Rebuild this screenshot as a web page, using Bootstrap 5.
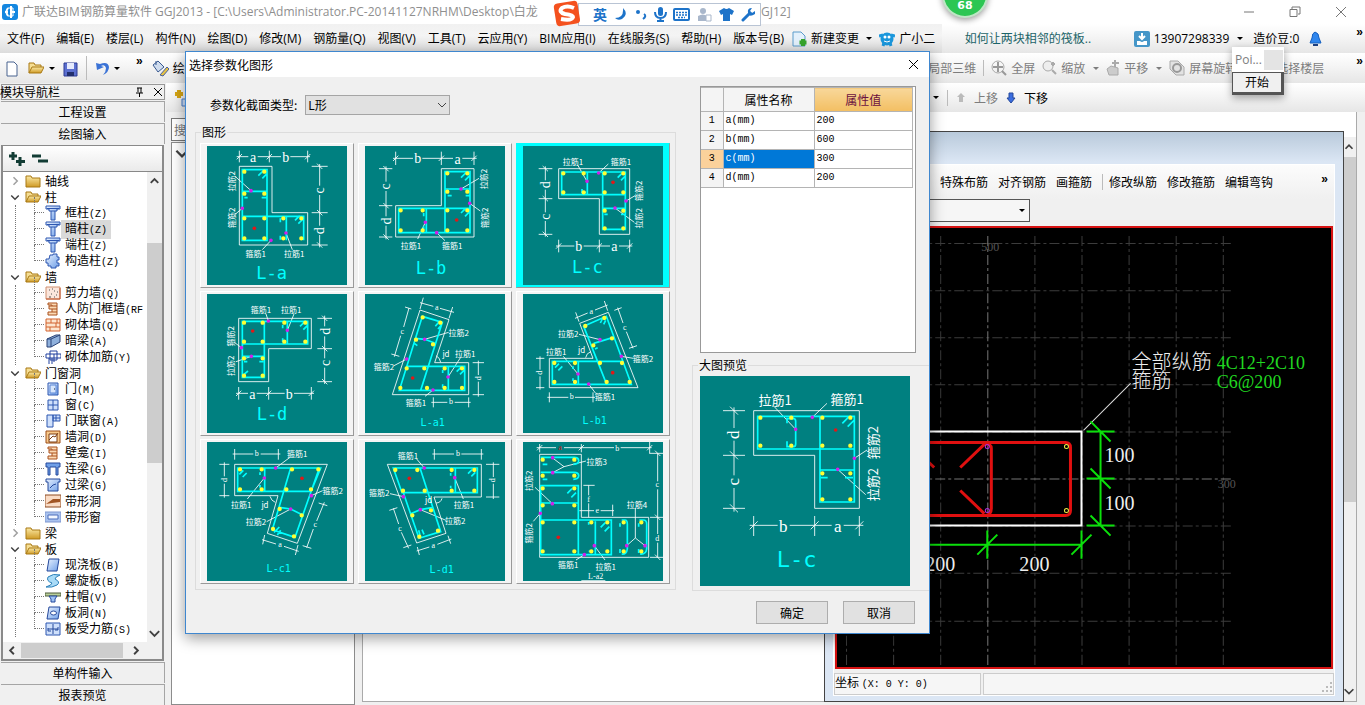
<!DOCTYPE html>
<html lang="zh-CN">
<head>
<meta charset="utf-8">
<meta name="viewport" content="width=device-width, initial-scale=1">
<title>广联达BIM钢筋算量软件 GGJ2013</title>
<link href="https://cdn.jsdelivr.net/npm/bootstrap@5.3.0/dist/css/bootstrap.min.css" rel="stylesheet">
<script src="https://cdn.jsdelivr.net/npm/bootstrap@5.3.0/dist/js/bootstrap.bundle.min.js"></script>
<style>
  :root{--ui:"Open Sans","Noto Sans CJK SC",sans-serif;--song:"Noto Sans CJK SC",sans-serif;--mono:"Liberation Mono","Noto Sans CJK SC",monospace;--face:#f0f0f0;--edge:#8c8c8c}
  body{font:12px/16px var(--song);color:#000;background:var(--face)}
  a{color:inherit;text-decoration:none}
  button,input,select{font:inherit;color:inherit}
  button{border:0;background:none;padding:0}
  svg{flex:none}
  .lat{font-family:var(--mono);font-size:10px}
  /* top bars */
  .titlebar{height:24px;background:#fff;color:#8f8f8f;font-family:var(--ui);padding:0 18px 0 2px}
  .winbtns{gap:34px;color:#777}
  .menubar{height:29px;background:linear-gradient(#f1f1f1,#f4f4f4 40%,#dcdcdc);font-family:var(--ui)}
  .menulist{width:69%;padding-left:7px;gap:12px;overflow:hidden}
  .strip{background:linear-gradient(#fff,#f6f6f6 40%,#e6e6e6)}
  .account{padding:0 2px 0 23px;gap:10px}
  .toolrow{height:30px}
  .lefttools{width:68%;padding-left:5px}
  .more{font:bold 12px/12px "Liberation Sans",sans-serif;align-self:flex-start;margin-top:2px}
  .caret{border:3px solid transparent;border-top-color:currentColor;border-bottom:0;width:6px;height:3px}
  .vsep{width:1px;height:16px;background:#bbb}
  .dim{color:#7d7d7d}
  /* navigation panel */
  .sidebar{width:166px;padding:1px 1px 0;gap:1px}
  .navhead{height:16px;border:1px solid #999}
  .navbtn{height:21px;flex:none;border:1px solid #a5a5a5;border-width:1px 1px 0 0;width:100%}
  .treebox{border:2px solid #8a8a8a;border-width:1px 2px 2px 2px;background:var(--face);margin-right:1px;min-height:0}
  .treetools{height:26px;background:linear-gradient(#fff,#eaeaea);border-bottom:1px solid #888;padding-left:5px;gap:6px}
  .treeview{background:#fff;min-width:0;overflow:hidden;padding:1px 0 0;list-style:none;margin:0}
  .treeview ul{list-style:none;padding:0;margin:0;position:relative}
  .treeview ul::before{content:"";position:absolute;left:12px;top:0;bottom:0;border-left:1px dotted #777}
  .node{display:flex;align-items:center;height:16px;white-space:nowrap;padding-left:6px;gap:4px}
  .leaf{display:flex;align-items:center;height:16px;white-space:nowrap;padding-left:42px;gap:4px;position:relative}
  .leaf::before{content:"";position:absolute;left:31px;top:-8px;width:10px;height:16px;border:1px dotted #777;border-width:0 0 1px 1px}
  .leaf.picked a{background:#d9d9d9;margin-left:-4px;padding:0 4px}
  .sb{width:15px;background:var(--face);align-items:center}
  .thumb{background:#cdcdcd}
  /* work area */
  .pane{background:#fff;border:1px solid var(--edge)}
  .searchbox{height:23px;border:1px solid #777;background:#fff;padding:0 2px;width:183px;color:#777}
  .cadwin{position:absolute;left:461px;top:19px;right:12px;bottom:-1px;border:1px solid #444;background:linear-gradient(#b9cadb,#dbe6f4 30px);padding:32px 8px 5px}
  .cadin{background:var(--face);border:1px solid #fff}
  .cadtools{height:34px;gap:10px;padding:0 6px 0 106px;background:linear-gradient(#fcfcfc,var(--face))}
  .cadcombo{width:196px;height:23px;border:1px solid #555;background:#f6f6f6;padding:0 4px;margin-bottom:4px;border-radius:0}
  .stage{background:#000;border:2px solid #d61212;margin:0 1px 4px;min-height:0}
  .status{height:22px}
  .status>span{border:1px solid #ccc;background:#f6f6f6}
  /* dialog */
  .dlg{position:absolute;left:185px;top:51px;width:745px;height:583px;border:1px solid #3f87cf;background:var(--face);box-shadow:0 4px 14px rgba(0,0,0,.4)}
  .dlghead{height:25px;background:#fff;padding:0 10px 0 3px;font-size:12px;flex:none}
  .typerow{height:55px;padding-left:15px;gap:8px}
  .typesel{width:145px;height:20px;border:1px solid #a5a5a5;background:#e1e1e1;padding:0 2px;appearance:none;border-radius:0}
  .box{border:1px solid #dcdcdc;margin:0;position:relative;min-width:0}
  .box>legend{position:absolute;top:-9px;left:5px;width:auto;float:none;font-size:12px;line-height:16px;background:var(--face);padding:0 1px;margin:0}
  .tiles{display:grid;grid-template-columns:repeat(3,154px);gap:3px 4px;padding:10px 0 0 4px}
  .tile{height:145px;background:#f4f4f4;border:1px solid;border-color:#fff #999 #999 #fff;padding:2px 6px}
  .tile.on{background:#0ff;border-color:#0ff #999 #999 #0ff}
  .tile svg,.big{display:block;background:#008080}
  .props{height:267px;border:1px solid #999;background:#fff;width:216px;padding:0 2px 0 0}
  .props table{width:100%;border-collapse:collapse;table-layout:fixed}
  .props td,.props th{border:1px solid #b4b4b4;border-left:0;font-weight:400;padding:0 2px;height:19px;line-height:18px}
  .props th{background:#f4f4f4;text-align:center}
  .props thead th{height:24px}
  .props td input{border:0;padding:0;width:100%;height:16px;outline:0;background:transparent;display:block}
  .okbtn{width:72px;height:23px;border:1px solid #adadad;background:#e1e1e1}
  /* drawings */
  .w{stroke:#fff;stroke-width:3;stroke-opacity:.85;fill:none}.c{stroke:#0ff;stroke-width:5;fill:none}
  .y,.m,.r{stroke-linecap:round;stroke-width:13;fill:none;stroke:#ff3}.m{stroke:#d020e8;stroke-width:11}.r{stroke:#e01818;stroke-width:11}
  .t{fill:#fff;font-family:var(--song);font-size:24px;text-anchor:middle;dominant-baseline:central}
  .d{fill:#fff;font-family:"Liberation Serif",serif;font-size:42px;text-anchor:middle;dominant-baseline:central}
  .d2{font-size:24px}
  .n{fill:#0ff;font-family:"DejaVu Sans Mono",monospace;font-size:51px;text-anchor:middle}
  .n2{font-size:30px}
  .big .t{font-size:39px}.big .d{font-size:51px}.big .n{font-size:66px}
  .cad text{font-family:"Liberation Serif","Noto Sans CJK SC",serif;font-size:20px;fill:#eee;font-weight:300}
  .cad .g{font-size:18px;fill:#20d820}.cad .axis{font-size:12px;fill:#555}
  /* floating bits */
  .ime{position:absolute;left:553px;top:0;height:28px;z-index:5}
  .imebar{border:1px solid #b9c4d4;background:#fff;height:23px;width:183px;margin-left:-4px;padding:0 4px 0 14px;color:#1d73c9;font-weight:700;font-size:14px}
  .ball{position:absolute;left:942px;top:-28px;width:46px;height:46px;border-radius:50%;background:#2cc653;border:2px solid #bfe5c6;box-shadow:0 2px 6px rgba(0,0,0,.4);color:#fff;font:bold 11px/16px "DejaVu Sans",sans-serif;padding-bottom:2px;z-index:4}
  .mini{position:absolute;left:1232px;top:47px;width:52px;box-shadow:0 3px 8px rgba(0,0,0,.35);z-index:4;background:#fff;font-family:var(--ui)}
  .mini button{height:23px;width:100%;border:1px solid #555;border-width:1px 3px 3px 1px;background:var(--face)}
</style>
</head>
<body class="d-flex flex-column vh-100 overflow-hidden position-relative">

<svg width="0" height="0" class="position-absolute" aria-hidden="true">
  <defs>
    <linearGradient id="gold" x2="0" y2="1"><stop stop-color="#fbe9a5"/><stop offset="1" stop-color="#cf9a25"/></linearGradient>
    <linearGradient id="blue" x2="1" y2="1"><stop stop-color="#e9f2ff"/><stop offset="1" stop-color="#6f9fe8"/></linearGradient>
    <symbol id="right" viewBox="0 0 16 16"><path d="M6 3l5 5-5 5" fill="none" stroke="#a0a0a0" stroke-width="2"/></symbol>
    <symbol id="down" viewBox="0 0 16 16"><path d="M3 6l5 5 5-5" fill="none" stroke="#404040" stroke-width="2"/></symbol>
    <symbol id="up" viewBox="0 0 16 16"><path d="M4 10l4-4 4 4" fill="none" stroke="#404040" stroke-width="2"/></symbol>
    <symbol id="fold" viewBox="0 0 16 16"><path d="M1 3h5l1 2h8v9H1z" fill="url(#gold)" stroke="#a87914"/></symbol>
    <symbol id="foldo" viewBox="0 0 16 16"><path d="M1 13V3h5l1 2h6v3" fill="#f6de93" stroke="#a87914"/><path d="M1 13l3-6h12l-3 6z" fill="url(#gold)" stroke="#a87914"/></symbol>
    <symbol id="col" viewBox="0 0 16 16"><path d="M1 1h14v3h-3v2h-2v9H6V6H4V4H1z" fill="url(#blue)" stroke="#2d56b0"/><path d="M2 3.500h12M6 6h4" stroke="#2d56b0"/></symbol>
    <symbol id="gcol" viewBox="0 0 16 16"><path d="M5 2h3V1h4v3h2v3h-2v3h2v3h-3v2H6v-2H3v-3H1V6h3z" fill="url(#blue)" stroke="#2d56b0"/></symbol>
    <symbol id="wall" viewBox="0 0 16 16"><path d="M1 2h14v12H1z" fill="#fbe6dc" stroke="#d09070"/><path d="M4 5h1M9 6h1M6 9h1M11 10h1M4 12h2M9 12h1M12 7h1M7 4h1" stroke="#555"/><path d="M1 14h14V3" fill="none" stroke="#c0522a"/></symbol>
    <symbol id="ibeam" viewBox="0 0 16 16"><path d="M3 2h9v12H3v-3h4V8H4V5h3V4H3z" fill="#fbd9b4" stroke="#a9501c"/><path d="M7 5h5M7 8h5M7 11h5" stroke="#a9501c"/></symbol>
    <symbol id="brick" viewBox="0 0 16 16"><path d="M1 2h14v12H1zM1 6h14M1 10h14M6 2v4M11 6v4M5 10v4M12 2v4" fill="#fde6cf" stroke="#d2622f"/></symbol>
    <symbol id="beam" viewBox="0 0 16 16"><path d="M2 6l9-4h4v7l-9 5H2z" fill="#8fb0dc" stroke="#2b4377"/><path d="M2 6h4l9-4M6 6v8" fill="none" stroke="#2b4377"/></symbol>
    <symbol id="rebar" viewBox="0 0 16 16"><path d="M1 5h15v4H1zM5 2h7v9H5zM4 9v6M7 9v6M9 5v8" fill="none" stroke="#1e3f9e"/></symbol>
    <symbol id="door" viewBox="0 0 16 16"><path d="M3 2h10v12H3z" fill="url(#blue)" stroke="#2d56b0"/><path d="M5 4h6v8H5z" fill="#d7e6fc" stroke="#5a86d6"/><path d="M9 8h1" stroke="#123"/></symbol>
    <symbol id="win" viewBox="0 0 16 16"><path d="M3 3h10v10H3zM8 3v10M3 8h10" fill="#cfe0fb" stroke="#2d56b0"/></symbol>
    <symbol id="doorwin" viewBox="0 0 16 16"><path d="M2 2h6v12H2zM8 2h7v6H8zM11 2v6M8 5h7" fill="#cfe0fb" stroke="#2d56b0"/></symbol>
    <symbol id="hole" viewBox="0 0 16 16"><path d="M1 2h14v12H1z" fill="#f8c98b" stroke="#9b4c16"/><path d="M4 5h8v8H4z" fill="#fff" stroke="#7c3d12"/><path d="M4 11l4-4 2 1 3-4" fill="none" stroke="#7c3d12"/></symbol>
    <symbol id="lbeam" viewBox="0 0 16 16"><path d="M1 2h14v4h-2v8h-2V6H5v8H3V6H1z" fill="#6f9fe8" stroke="#24489b"/></symbol>
    <symbol id="gbeam" viewBox="0 0 16 16"><path d="M1 2h14v3h-2v9H3V5H1z" fill="url(#blue)" stroke="#24489b"/><path d="M5 11l3-3 3-1" fill="none" stroke="#24489b"/></symbol>
    <symbol id="sthole" viewBox="0 0 16 16"><path d="M0 2h16v12H0z" fill="#fadcc6" stroke="#8e4a20"/><path d="M1 11l7-5h7v3l-8 1z" fill="#a15524"/></symbol>
    <symbol id="stwin" viewBox="0 0 16 16"><path d="M0 3h16v10H0z" fill="#a9c2ee" stroke="#7e97d0"/><path d="M3 6h10v4H3z" fill="#f2f7ff" stroke="#4d6ebc"/></symbol>
    <symbol id="slab" viewBox="0 0 16 16"><path d="M4 2h10l-2 12H2z" fill="url(#blue)" stroke="#24489b"/></symbol>
    <symbol id="spiral" viewBox="0 0 16 16"><path d="M3 4q5-4 12-2-5 2-5 4 6 3 2 6-5 3-11 2 6-2 6-4-6-2-4-6z" fill="#a9dbf7" stroke="#2b7fb8"/></symbol>
    <symbol id="cap" viewBox="0 0 16 16"><path d="M0 4h16v3H0z" fill="#b9cf9a" stroke="#4c5a3b"/><path d="M4 7h8l-2 3v3H6v-3z" fill="#9cc0f2" stroke="#24489b"/></symbol>
    <symbol id="shole" viewBox="0 0 16 16"><path d="M4 2h11l-2 12H2z" fill="url(#blue)" stroke="#24489b"/><ellipse cx="8.500" cy="8" rx="3" ry="2" fill="#fff" stroke="#24489b"/></symbol>
    <symbol id="force" viewBox="0 0 16 16"><path d="M1 2h14v12H1z" fill="#cfe0fb" stroke="#2d56b0"/><path d="M8 3v10M3 8h10M3 7v3h3M13 6v3h-3" fill="none" stroke="#24489b"/></symbol>
  </defs>
</svg>

<header class="titlebar d-flex align-items-center justify-content-between flex-shrink-0">
  <div class="d-flex align-items-center gap-1 text-nowrap">
    <svg width="16" height="16" viewBox="0 0 16 16"><rect width="16" height="16" rx="3" fill="#1487e0"/><path d="M9 2v12M9 8h4M3 8h3M6 4q-3 4 0 8" fill="none" stroke="#fff" stroke-width="2"/><path d="M6 4h5v8H6" fill="none" stroke="#fff"/></svg>
    <span>广联达BIM钢筋算量软件 GGJ2013 - [C:\Users\Administrator.PC-20141127NRHM\Desktop\白龙</span>
    <span class="position-absolute" style="left:761px">GJ12]</span>
  </div>
  <div class="winbtns d-flex">
    <svg width="12" height="12"><path d="M1 6h10" stroke="#777"/></svg>
    <svg width="12" height="12"><path d="M1 3.500h7v7H1zM3 3V1h8v7H9" fill="none" stroke="#777"/></svg>
    <svg width="12" height="12"><path d="M1 1l10 10M11 1L1 11" stroke="#777"/></svg>
  </div>
</header>

<nav class="menubar d-flex flex-shrink-0">
  <div class="menulist d-flex align-items-center text-nowrap">
    <a href="#">文件(F)</a><a href="#">编辑(E)</a><a href="#">楼层(L)</a><a href="#">构件(N)</a><a href="#">绘图(D)</a><a href="#">修改(M)</a><a href="#">钢筋量(Q)</a><a href="#">视图(V)</a><a href="#">工具(T)</a><a href="#">云应用(Y)</a><a href="#">BIM应用(I)</a><a href="#">在线服务(S)</a><a href="#">帮助(H)</a><a href="#">版本号(B)</a>
    <a href="#" class="d-flex align-items-center gap-1" style="margin-left:-4px"><svg width="15" height="16" viewBox="0 0 15 16"><path d="M1 1h8l4 4v10H1z" fill="#e3f0fb" stroke="#5a9bcb"/><path d="M11 8v7M7.500 11.500h7" stroke="#37a42c" stroke-width="4"/></svg>新建变更</a>
    <span class="caret" style="margin-left:-5px"></span>
    <a href="#" class="d-flex align-items-center gap-1" style="margin-left:-5px"><svg width="16" height="16" viewBox="0 0 16 16"><circle cx="8" cy="8" r="6.500" fill="#1b97dc"/><path d="M0 5l4-1M16 5l-4-1M4 15l1-3M12 15l-1-3" stroke="#1b97dc" stroke-width="3"/><circle cx="6" cy="6" r="1.500" fill="#fff"/><circle cx="10" cy="6" r="1.500" fill="#fff"/><path d="M5 10q3 2 6 0" stroke="#fff" fill="none"/></svg>广小二</a>
  </div>
  <div class="strip account flex-grow-1 d-flex align-items-center text-nowrap">
    <a href="#" class="me-auto" style="color:#1c6468">如何让两块相邻的筏板..</a>
    <div class="d-flex align-items-center gap-1">
      <svg width="16" height="16"><rect width="16" height="16" rx="2" fill="#4596c8"/><path d="M8 2v5M5 5l3 3 3-3" stroke="#fff" stroke-width="2" fill="none"/><path d="M3 10h3q2 2 4 0h3v4H3z" fill="#fff"/></svg>
      <span>13907298339</span><span class="caret ms-1"></span>
    </div>
    <span>造价豆:0</span>
    <svg width="13" height="16"><path d="M6 1q4 1 4 6l2 5H1l2-5q0-5 3-6z" fill="#2f86ee" stroke="#1560c0"/><path d="M4 14h5" stroke="#1c3f80" stroke-width="2"/></svg>
    <span class="more ms-4">»</span>
  </div>
</nav>

<div class="toolrow strip d-flex flex-shrink-0">
  <div class="lefttools d-flex align-items-center gap-2">
    <button type="button" aria-label="新建"><svg width="14" height="16"><path d="M2 1h7l3 3v11H2z" fill="#fff" stroke="#49628f"/></svg></button>
    <button type="button" aria-label="打开" class="d-flex align-items-center gap-1"><svg width="18" height="16" viewBox="0 0 16 16"><use href="#foldo"/></svg><span class="caret"></span></button>
    <button type="button" aria-label="保存"><svg width="15" height="15"><path d="M1 1h13v13H1z" fill="#5b6fd0" stroke="#2c3a92"/><path d="M4 1h7v6H4z" fill="#e5eafc"/><path d="M4 10h7v4H4z" fill="#222f6d"/></svg></button>
    <span class="vsep" style="height:24px"></span>
    <button type="button" aria-label="撤销" class="d-flex align-items-center gap-1"><svg width="15" height="15"><path d="M1 2l1 7 7-3-3-1q4-2 5 2 0 4-3 7 6-3 6-8-1-6-9-3z" fill="#3b73d6"/></svg><span class="caret"></span></button>
    <span class="more ms-2">»</span>
    <button type="button" class="d-flex align-items-center gap-1"><svg width="18" height="18"><path d="M2 6l5-4 6 6-6 5z" fill="#cfdcee" stroke="#37588f"/><path d="M5 6V2" stroke="#37588f"/><path d="M9 16l7-8 2 2-6 7z" fill="#e8c342" stroke="#48609a"/></svg>绘</button>
  </div>
  <div class="flex-grow-1 d-flex align-items-center text-nowrap dim" style="gap:7px;padding-right:2px">
    <span>局部三维</span><span class="vsep"></span>
    <button type="button" class="d-flex align-items-center gap-1"><svg width="16" height="16"><circle cx="7" cy="7" r="6" fill="none" stroke="#aaa"/><path d="M7 2v10M2 7h10M11 11l4 4" stroke="#999" stroke-width="2"/></svg>全屏</button>
    <button type="button" class="d-flex align-items-center gap-1"><svg width="15" height="16"><circle cx="6" cy="6" r="5" fill="#eee" stroke="#aaa"/><path d="M10 10l4 4M11 2v4M9 4h4" stroke="#aaa" stroke-width="2"/></svg>缩放<span class="caret ms-1"></span></button>
    <button type="button" class="d-flex align-items-center gap-1"><svg width="14" height="16"><path d="M1 9l4-3 7 2v7H3z" fill="#ccc" stroke="#aaa"/><path d="M9 0v7M6 3h7" stroke="#aaa" stroke-width="2"/></svg>平移<span class="caret ms-1"></span></button>
    <button type="button" class="d-flex align-items-center gap-1"><svg width="16" height="16"><path d="M1 1h8l6 6v8H7L1 9z" fill="#e2e2e2" stroke="#aaa"/><circle cx="8" cy="8" r="4" fill="none" stroke="#999" stroke-width="2"/></svg>屏幕旋转</button>
    <span class="ms-4 ps-2">选择楼层</span>
    <span class="more ms-auto text-black">»</span>
  </div>
</div>

<main class="d-flex flex-grow-1" style="min-height:0">
  <aside class="sidebar d-flex flex-column flex-shrink-0">
    <div class="navhead d-flex align-items-center justify-content-between flex-shrink-0">
      <span style="margin-left:-2px">模块导航栏</span>
      <span class="d-flex gap-2"><svg width="11" height="10"><path d="M3 1h5M4 1v4M7 1v5M2 6h7M5.500 6v4" stroke="#000" fill="none"/></svg><svg width="11" height="10"><path d="M1 1l8 8M9 1L1 9" stroke="#000"/></svg></span>
    </div>
    <button type="button" class="navbtn">工程设置</button>
    <button type="button" class="navbtn">绘图输入</button>
    <div class="treebox d-flex flex-column flex-grow-1">
      <div class="treetools d-flex align-items-center flex-shrink-0">
        <svg width="17" height="16"><path d="M5 1v8M1 5h8M12 6v9M8 10.500h9" stroke="#123c34" stroke-width="3"/></svg>
        <svg width="17" height="16"><path d="M1 5h9M7 10h10" stroke="#123c34" stroke-width="3"/></svg>
      </div>
      <div class="d-flex flex-grow-1" style="min-height:0">
        <ul class="treeview flex-grow-1">
          <li><div class="node"><svg width="12" height="12"><use href="#right"/></svg><svg width="16" height="16"><use href="#fold"/></svg><a href="#">轴线</a></div></li>
          <li><div class="node"><svg width="12" height="12"><use href="#down"/></svg><svg width="16" height="16"><use href="#foldo"/></svg><a href="#">柱</a></div>
            <ul>
              <li class="leaf"><svg width="16" height="16"><use href="#col"/></svg><a href="#">框柱<span class="lat">(Z)</span></a></li>
              <li class="leaf picked"><svg width="16" height="16"><use href="#col"/></svg><a href="#">暗柱<span class="lat">(Z)</span></a></li>
              <li class="leaf"><svg width="16" height="16"><use href="#col"/></svg><a href="#">端柱<span class="lat">(Z)</span></a></li>
              <li class="leaf"><svg width="16" height="16"><use href="#gcol"/></svg><a href="#">构造柱<span class="lat">(Z)</span></a></li>
            </ul></li>
          <li><div class="node"><svg width="12" height="12"><use href="#down"/></svg><svg width="16" height="16"><use href="#foldo"/></svg><a href="#">墙</a></div>
            <ul>
              <li class="leaf"><svg width="16" height="16"><use href="#wall"/></svg><a href="#">剪力墙<span class="lat">(Q)</span></a></li>
              <li class="leaf"><svg width="16" height="16"><use href="#ibeam"/></svg><a href="#">人防门框墙<span class="lat">(RF</span></a></li>
              <li class="leaf"><svg width="16" height="16"><use href="#brick"/></svg><a href="#">砌体墙<span class="lat">(Q)</span></a></li>
              <li class="leaf"><svg width="16" height="16"><use href="#beam"/></svg><a href="#">暗梁<span class="lat">(A)</span></a></li>
              <li class="leaf"><svg width="16" height="16"><use href="#rebar"/></svg><a href="#">砌体加筋<span class="lat">(Y)</span></a></li>
            </ul></li>
          <li><div class="node"><svg width="12" height="12"><use href="#down"/></svg><svg width="16" height="16"><use href="#foldo"/></svg><a href="#">门窗洞</a></div>
            <ul>
              <li class="leaf"><svg width="16" height="16"><use href="#door"/></svg><a href="#">门<span class="lat">(M)</span></a></li>
              <li class="leaf"><svg width="16" height="16"><use href="#win"/></svg><a href="#">窗<span class="lat">(C)</span></a></li>
              <li class="leaf"><svg width="16" height="16"><use href="#doorwin"/></svg><a href="#">门联窗<span class="lat">(A)</span></a></li>
              <li class="leaf"><svg width="16" height="16"><use href="#hole"/></svg><a href="#">墙洞<span class="lat">(D)</span></a></li>
              <li class="leaf"><svg width="16" height="16"><use href="#ibeam"/></svg><a href="#">壁龛<span class="lat">(I)</span></a></li>
              <li class="leaf"><svg width="16" height="16"><use href="#lbeam"/></svg><a href="#">连梁<span class="lat">(G)</span></a></li>
              <li class="leaf"><svg width="16" height="16"><use href="#gbeam"/></svg><a href="#">过梁<span class="lat">(G)</span></a></li>
              <li class="leaf"><svg width="16" height="16"><use href="#sthole"/></svg><a href="#">带形洞</a></li>
              <li class="leaf"><svg width="16" height="16"><use href="#stwin"/></svg><a href="#">带形窗</a></li>
            </ul></li>
          <li><div class="node"><svg width="12" height="12"><use href="#right"/></svg><svg width="16" height="16"><use href="#fold"/></svg><a href="#">梁</a></div></li>
          <li><div class="node"><svg width="12" height="12"><use href="#down"/></svg><svg width="16" height="16"><use href="#foldo"/></svg><a href="#">板</a></div>
            <ul>
              <li class="leaf"><svg width="16" height="16"><use href="#slab"/></svg><a href="#">现浇板<span class="lat">(B)</span></a></li>
              <li class="leaf"><svg width="16" height="16"><use href="#spiral"/></svg><a href="#">螺旋板<span class="lat">(B)</span></a></li>
              <li class="leaf"><svg width="16" height="16"><use href="#cap"/></svg><a href="#">柱帽<span class="lat">(V)</span></a></li>
              <li class="leaf"><svg width="16" height="16"><use href="#shole"/></svg><a href="#">板洞<span class="lat">(N)</span></a></li>
              <li class="leaf"><svg width="16" height="16"><use href="#force"/></svg><a href="#">板受力筋<span class="lat">(S)</span></a></li>
            </ul></li>
        </ul>
        <div class="sb d-flex flex-column justify-content-between">
          <svg width="15" height="18" viewBox="0 0 16 16"><use href="#up"/></svg>
          <span class="thumb w-100" style="height:220px;margin:53px 0 auto"></span>
          <svg width="15" height="18" viewBox="0 0 16 16"><use href="#down"/></svg>
        </div>
      </div>
      <div class="d-flex align-items-center flex-shrink-0" style="height:17px">
        <svg width="18" height="15" viewBox="0 0 16 16"><path d="M10 4L6 8l4 4" fill="none" stroke="#404040" stroke-width="2"/></svg>
        <span class="thumb" style="width:102px;height:15px"></span>
        <svg width="26" height="15" viewBox="0 0 16 16"><path d="M6 4l4 4-4 4" fill="none" stroke="#404040" stroke-width="2"/></svg>
      </div>
    </div>
    <button type="button" class="navbtn">单构件输入</button>
    <button type="button" class="navbtn">报表预览</button>
  </aside>

  <div class="flex-grow-1 d-flex flex-column" style="min-width:0">
    <div class="strip d-flex flex-shrink-0" style="height:29px">
      <div class="d-flex align-items-center" style="width:763px;padding-left:8px"><svg width="16" height="18"><path d="M5 1v8M1 5h8" stroke="#d6a514" stroke-width="4"/><path d="M8 10h7v7H8z" fill="#cfe0fb" stroke="#4d7fc9"/></svg></div>
      <div class="d-flex align-items-center gap-2 text-nowrap">
        <span class="caret ms-1"></span><span class="vsep"></span>
        <button type="button" class="d-flex align-items-center gap-2 dim"><svg width="10" height="12"><path d="M5 1l4 4H7v5H3V5H1z" fill="#bbb"/></svg>上移</button>
        <button type="button" class="d-flex align-items-center gap-2"><svg width="10" height="12"><path d="M5 11l4-5H7V1H3v5H1z" fill="#3c6ee0" stroke="#24489b"/></svg>下移</button>
      </div>
    </div>
    <div class="flex-grow-1 d-flex" style="gap:7px;padding:0 8px 0 5px;min-height:0">
      <div class="d-flex flex-column" style="width:184px;padding-top:6px;gap:1px">
        <input class="searchbox" type="text" aria-label="搜索构件" placeholder="搜">
        <div class="pane flex-grow-1"><svg width="20" height="18" viewBox="0 0 18 18"><use href="#down"/></svg></div>
      </div>
      <div class="flex-grow-1 position-relative bg-white" style="border:1px solid #aaa;border-width:0 1px 1px 1px;margin-bottom:3px;min-width:0">
        <div class="position-absolute end-0 d-flex flex-column justify-content-between sb" style="top:25px;bottom:0;width:14px">
          <svg width="14" height="20" viewBox="0 0 16 16"><use href="#up"/></svg>
          <span class="thumb w-100" style="height:345px;margin:0 0 auto"></span>
          <svg width="14" height="20" viewBox="0 0 16 16"><use href="#down"/></svg>
        </div>
        <section class="cadwin d-flex flex-column">
          <div class="cadin d-flex flex-column flex-grow-1" style="min-height:0">
            <div class="cadtools d-flex align-items-center text-nowrap flex-shrink-0">
              <a href="#">特殊布筋</a><a href="#">对齐钢筋</a><a href="#">画箍筋</a><span class="vsep"></span><a href="#" style="margin-left:-4px">修改纵筋</a><a href="#">修改箍筋</a><a href="#">编辑弯钩</a><span class="more ms-auto mt-2">»</span>
            </div>
            <div class="cadcombo d-flex align-items-center justify-content-end flex-shrink-0"><span class="caret"></span></div>
            <div class="stage flex-grow-1">
              <svg class="cad d-block" width="100%" height="100%" viewBox="837 228 493 439" preserveAspectRatio="xMinYMin slice">
                <g stroke="#3c3c3c" stroke-dasharray="10 3 3 3"><path d="M846.500 236V665M893.500 236V665M940.500 236V665M1034.500 236V665M1081.500 236V665M1128.500 236V665M1175.500 236V665M1222.500 236V665M840 243.500H1230M840 290.500H1230M840 337.500H1230M840 384.500H1230M840 431.500H1230M840 525.500H1230M840 572.500H1230M840 620.500H1230"/><path d="M987.500 236V665M840 478.500H1230" stroke="#777"/></g>
                <text class="axis" x="981" y="251">500</text><text class="axis" x="1217" y="487">300</text>
                <path d="M860 431H1081V525H860" fill="none" stroke="#fff" stroke-width="2"/>
                <path d="M870 442H1065q5 0 5 5V510q0 5-5 5H870M984 443q7 0 7 5V508q0 7-7 7M984 444L960 467M960 490L984 513M910 444L934 467" fill="none" stroke="#e01010" stroke-width="3"/>
                <g fill="none"><circle cx="987" cy="446" r="2" stroke="#b030e0"/><circle cx="987" cy="510" r="2" stroke="#b030e0"/><circle cx="1066" cy="446" r="2" stroke="#ee4"/><circle cx="1066" cy="510" r="2" stroke="#ee4"/></g>
                <path d="M1083 430L1130 383" stroke="#ddd"/>
                <path d="M1100 431V525M1086 431h28M1086 478h28M1086 525h28M1090 421l20 20M1090 468l20 20M1090 515l20 20M880 544H1081M987 530v28M1081 530v28M977 554l20-20M1071 554l20-20" stroke="#0be00b" stroke-width="2"/>
                <text x="1131" y="369">全部纵筋</text><text x="1131" y="388">箍筋</text>
                <text class="g" x="1216" y="369">4C12+2C10</text><text class="g" x="1216" y="388">C6@200</text>
                <text x="1104" y="462">100</text><text x="1104" y="509">100</text><text x="1019" y="570">200</text><text x="925" y="570">200</text>
              </svg>
            </div>
            <div class="status d-flex flex-shrink-0" style="gap:2px"><span style="width:147px">坐标 <span class="lat">(X: 0 Y: 0)</span></span><span class="flex-grow-1 d-flex align-items-end justify-content-end"><svg width="12" height="12"><path d="M9 1h2M5 5h2M9 5h2M1 9h2M5 9h2M9 9h2" stroke="#bbb" stroke-width="2"/></svg></span></div>
          </div>
        </section>
      </div>
    </div>
  </div>
</main>

<div class="ime d-flex align-items-center">
  <svg width="29" height="28" viewBox="0 0 29 28" style="z-index:1"><rect x="2" y="2" width="24" height="23" rx="4" fill="#f4511e" transform="rotate(-9 14 14)"/><path d="M21 8q-7-3-12 0-4 4 3 6 8 1 8 3-1 4-12 2" fill="none" stroke="#fff" stroke-width="4"/></svg>
  <div class="imebar d-flex align-items-center justify-content-between">
    <span>英</span>
    <svg width="14" height="14"><path d="M9 1q6 6-1 11-4 2-7-1 9 0 8-10z" fill="#1d73c9"/></svg>
    <svg width="12" height="14"><circle cx="3" cy="5" r="2" fill="#1d73c9"/><path d="M9 7q3 2-1 5" stroke="#1d73c9" stroke-width="2" fill="none"/></svg>
    <svg width="13" height="16"><rect x="4" y="1" width="5" height="9" rx="2.500" fill="#1d73c9"/><path d="M1 6q0 6 5.500 6T12 6M6.500 12v3M3 15h7" stroke="#1d73c9" stroke-width="2" fill="none"/></svg>
    <svg width="17" height="13"><rect x="1" y="1" width="15" height="11" rx="1" fill="none" stroke="#1d73c9" stroke-width="2"/><path d="M3 4.500h11M3 7h11M5 9.500h7" stroke="#1d73c9" stroke-width="1.500" stroke-dasharray="2 1"/></svg>
    <svg width="15" height="15"><circle cx="6" cy="4" r="3" fill="#a9b7cb"/><path d="M1 14V9q5-3 9 0v5z" fill="#a9b7cb"/><path d="M9 8h5v6H9z" fill="#fff" stroke="#a9b7cb"/></svg>
    <svg width="15" height="14"><path d="M5 1q2.500 2 5 0l5 3-2 4-2-1v7H4V7L2 8 0 4z" fill="#1d73c9"/></svg>
    <svg width="15" height="15"><path d="M2 13l7-7" stroke="#1d73c9" stroke-width="3" stroke-linecap="round"/><path d="M14 4l-3 2-2-2 2-3q-5 0-4 5t7 1z" fill="#1d73c9"/></svg>
  </div>
</div>
<div class="ball d-flex align-items-end justify-content-center"><span>68</span></div>
<div class="mini">
  <div class="d-flex dim justify-content-between align-items-center" style="height:25px;padding:0 1px 0 3px">Poi...<span style="width:19px;height:20px;background:#e4e4e4"></span></div>
  <button type="button">开始</button>
</div>

<div class="dlg d-flex flex-column" role="dialog" aria-labelledby="dlgname">
  <div class="dlghead d-flex align-items-center justify-content-between"><span id="dlgname">选择参数化图形</span><button type="button" class="d-flex" aria-label="关闭"><svg width="11" height="11"><path d="M1 1l9 9M10 1L1 10" stroke="#000"/></svg></button></div>
  <div class="d-flex flex-grow-1">
    <div class="d-flex flex-column" style="width:490px;padding-left:9px">
      <div class="typerow d-flex align-items-center">
        <label for="shapetype">参数化截面类型:</label>
        <div class="position-relative d-flex align-items-center"><select id="shapetype" class="typesel"><option>L形</option></select><svg class="position-absolute end-0 pe-none" width="16" height="16"><path d="M4 6l4 4 4-4" fill="none" stroke="#444"/></svg></div>
      </div>
      <fieldset class="box" style="height:458px"><legend>图形</legend>
        <div class="tiles">
          <button type="button" class="tile"><svg width="140" height="139" viewBox="66 51 420 417">
            <path class="w" d="M163 112H261V251H368V348H163ZM163 65V100M253 65V100M368 65V100M155 83H190M218 83H288M316 83H375M155 91l16-16M245 91l16-16M360 91l16-16M380 112H428M380 251H428M380 348H428M404 105V170M404 198V290M404 318V355M396 104l16 16M396 243l16 16M396 340l16 16M150 142L198 185M148 258L172 238M232 362L258 334M322 362L303 312"/>
            <path class="c" d="M172 122H246V334H172ZM172 262H356V334M172 187H246M304 262V334M220 140l14-14M232 148l14-14M330 274l14-14M340 284l14-14M178 206h10M230 206h14M286 268v12M286 320v12"/>
            <path class="y" d="M178 128h0M238 128h0M178 194h0M238 194h0M178 268h0M238 268h0M295 268h0M349 268h0M178 328h0M238 328h0M295 328h0M349 328h0"/><path class="m" d="M198 185h0M172 238h0M258 334h0M303 312h0"/><path class="r" d="M208 298h0"/>
            <text class="d" x="204" y="86">a</text><text class="d" x="302" y="84">b</text><text class="d" transform="rotate(-90 404 184)" x="404" y="184">c</text><text class="d" transform="rotate(-90 404 305)" x="404" y="305">d</text>
            <text class="t" transform="rotate(-90 139 157)" x="139" y="157">拉筋2</text><text class="t" transform="rotate(-90 139 266)" x="139" y="266">箍筋2</text><text class="t" x="212" y="373">箍筋1</text><text class="t" x="328" y="373">拉筋1</text><text class="n" x="260" y="450">L-a</text></svg></button>
          <button type="button" class="tile"><svg width="140" height="139" viewBox="30 51 420 417">
            <path class="w" d="M259 119H357V324H122V230H259ZM122 68V108M259 68V108M357 68V108M114 88H174M202 88H294M322 88H365M114 96l16-16M251 96l16-16M349 96l16-16M72 119H112M72 230H112M72 324H112M93 112V158M93 186V262M93 290V331M85 111l16 16M85 222l16 16M85 316l16 16M372 148L318 180M376 246L344 223M188 330L211 280M270 335L245 311"/>
            <path class="c" d="M270 128H345V311H270ZM345 238H131V311H345M214 238V311M270 180H345M318 146l14-14M330 154l14-14M318 252l14-14M330 262l14-14M278 200h12M332 200h12M206 252v10M206 292v10"/>
            <path class="y" d="M277 133h0M337 133h0M277 188h0M337 188h0M277 244h0M337 244h0M137 244h0M203 244h0M137 304h0M203 304h0M277 304h0M337 304h0"/><path class="m" d="M318 180h0M344 223h0M211 280h0M245 311h0"/><path class="r" d="M305 273h0"/>
            <text class="d" x="188" y="88">b</text><text class="d" x="308" y="90">a</text><text class="d" transform="rotate(-90 93 172)" x="93" y="172">c</text><text class="d" transform="rotate(-90 93 276)" x="93" y="276">d</text>
            <text class="t" transform="rotate(-90 386 150)" x="386" y="150">拉筋2</text><text class="t" transform="rotate(-90 388 266)" x="388" y="266">箍筋2</text><text class="t" x="168" y="349">拉筋1</text><text class="t" x="292" y="349">箍筋1</text><text class="n" x="228" y="435">L-b</text></svg></button>
          <button type="button" class="tile on"><svg width="140" height="139" viewBox="504 51 420 417">
            <path class="w" d="M611 119H824V316H733V209H611ZM551 119H592M551 209H592M551 316H592M571 112V154M571 182V250M571 276V323M563 111l16 16M563 201l16 16M563 308l16 16M611 332V370M733 332V370M824 332V370M603 351H658M686 351H765M792 351H832M603 359l16-16M725 359l16-16M816 359l16-16M668 108L696 157M760 105L731 132M840 200L813 216M838 280L780 237"/>
            <path class="c" d="M620 129H811V197H620ZM743 129V301H811V129M697 129V197M743 238H811M788 146l12-12M798 154l12-12M681 180v10h12M748 256h10M798 256h10"/>
            <path class="y" d="M625 133h0M686 133h0M749 133h0M805 133h0M625 190h0M686 190h0M749 190h0M805 190h0M749 245h0M805 245h0M749 298h0M805 298h0"/><path class="m" d="M731 132h0M696 157h0M813 216h0M780 237h0"/><path class="r" d="M774 160h0"/>
            <text class="d" transform="rotate(-90 571 167)" x="571" y="167">d</text><text class="d" transform="rotate(-90 571 263)" x="571" y="263">c</text><text class="d" x="671" y="351">b</text><text class="d" x="778" y="351">a</text>
            <text class="t" x="654" y="98">拉筋1</text><text class="t" x="798" y="98">箍筋1</text><text class="t" transform="rotate(-90 850 185)" x="850" y="185">箍筋2</text><text class="t" transform="rotate(-90 850 268)" x="850" y="268">拉筋2</text><text class="n" x="697" y="432">L-c</text></svg></button>
          <button type="button" class="tile"><svg width="140" height="139" viewBox="51 15 420 417">
            <path class="w" d="M146 88H364V179H236V278H146ZM382 88H426M382 179H426M382 278H426M404 80V112M404 142V208M404 236V285M396 80l16 16M396 171l16 16M396 270l16 16M146 294V332M236 294V332M364 294V332M138 313H174M200 313H284M312 313H372M138 321l16-16M228 321l16-16M356 321l16-16M228 75L235 96M312 75L292 124M133 160L154 176M138 218L184 202"/>
            <path class="c" d="M157 97H353V165H157ZM157 165V265H223V97M292 97V165M157 202H223M330 112l12-12M340 122l12-12M162 256l12-10M278 108v10M278 148v10M162 218h10M208 218h12"/>
            <path class="y" d="M162 101h0M218 101h0M283 101h0M346 101h0M162 158h0M218 158h0M283 158h0M346 158h0M162 208h0M218 208h0M162 260h0M218 260h0"/><path class="m" d="M235 96h0M292 124h0M154 176h0M184 202h0"/><path class="r" d="M188 126h0"/>
            <text class="d" transform="rotate(-90 407 127)" x="407" y="127">d</text><text class="d" transform="rotate(-90 407 222)" x="407" y="222">c</text><text class="d" x="187" y="315">a</text><text class="d" x="298" y="315">b</text>
            <text class="t" x="213" y="60">箍筋1</text><text class="t" x="304" y="60">拉筋1</text><text class="t" transform="rotate(-90 122 142)" x="122" y="142">箍筋2</text><text class="t" transform="rotate(-90 122 230)" x="122" y="230">拉筋2</text><text class="n" x="246" y="394">L-d</text></svg></button>
          <button type="button" class="tile"><svg width="140" height="139" viewBox="525 15 420 417">
            <path class="w" d="M690 63L777 92L734 221H836V317H607ZM700 26L690 60M788 54L777 88M690 41L730 52M750 58L792 70M645 54L664 60M604 195L628 202M657 57L641 114M632 140L613 203M848 221H882M848 317H882M865 215V258M865 278V323M730 325V355M836 325V355M724 340H772M794 340H842M776 130L704 151M612 230L650 210M812 205L774 264M705 322L729 303M738 200q12 6 14 20"/>
            <path class="c" d="M697 82L757 100L692 304H628ZM648 232H824V304H628M775 232V304M676 148L704 151L734 162M736 112l10-12M744 120l10-12M800 248l12-12M810 256l12-12M758 242v10M758 286v10M674 164l8 6"/>
            <path class="y" d="M698 85h0M751 101h0M678 152h0M729 166h0M650 238h0M703 238h0M764 238h0M816 238h0M631 297h0M711 297h0M764 297h0M816 297h0"/><path class="m" d="M704 151h0M650 210h0M774 264h0M729 303h0"/><path class="r" d="M668 267h0"/>
            <text class="d d2" x="740" y="54">a</text><text class="d d2" x="637" y="127">c</text><text class="d d2" transform="rotate(-90 865 268)" x="865" y="268">d</text><text class="d d2" x="783" y="338">b</text>
            <text class="t" x="806" y="131">拉筋2</text><text class="t" x="582" y="233">箍筋2</text><text class="t" x="826" y="193">拉筋1</text><text class="t" x="768" y="193">jd</text><text class="t" x="678" y="340">箍筋1</text><text class="n n2" x="728" y="410">L-a1</text></svg></button>
          <button type="button" class="tile"><svg width="140" height="139" viewBox="504 495 420 417">
            <path class="w" d="M674 583L760 550L849 776H583V688H714ZM662 550L672 578M748 516L758 545M660 568L698 552M720 543L758 528M778 544L800 536M822 658L846 650M788 536L804 582M814 608L834 658M543 688H568M543 776H568M555 682V722M555 742V782M583 790V820M714 790V820M577 805H640M660 805H720M672 616L735 632M625 682L669 735M835 688L799 682M722 793L701 765M692 686q2-14 16-18"/>
            <path class="c" d="M686 592L754 562L829 766H755ZM800 697H592V766H829M670 697V766M716 643L775 625M736 582l6-12M746 586l6-12M600 716l12-12M610 724l12-12M654 712v8M654 748v8M720 660l8-4"/>
            <path class="y" d="M691 591h0M748 567h0M715 649h0M771 628h0M598 702h0M660 702h0M735 702h0M801 702h0M598 759h0M660 759h0M755 759h0M824 759h0"/><path class="m" d="M735 632h0M799 682h0M669 735h0M701 765h0"/><path class="r" d="M773 731h0"/>
            <text class="d d2" x="709" y="547">a</text><text class="d d2" x="809" y="595">c</text><text class="d d2" transform="rotate(-90 555 731)" x="555" y="731">d</text><text class="d d2" x="650" y="803">b</text>
            <text class="t" x="640" y="612">拉筋2</text><text class="t" x="604" y="668">拉筋1</text><text class="t" x="680" y="662">jd</text><text class="t" x="864" y="688">箍筋2</text><text class="t" x="750" y="803">箍筋1</text><text class="n n2" x="719" y="885">L-b1</text></svg></button>
          <button type="button" class="tile"><svg width="140" height="139" viewBox="51 459 420 417">
            <path class="w" d="M134 526H412L322 763L232 733L264 620H134ZM134 480V512M265 480V512M128 495H190M212 495H271M88 526H118M88 620H118M103 520V562M103 584V626M386 642L412 650M338 770L364 778M403 640L380 696M370 720L350 776M224 738L218 766M324 768L316 798M216 752L258 765M282 772L326 787M300 505L257 537M172 630L223 567M398 605L364 620M230 698L302 660M240 622q4 14 16 18"/>
            <path class="c" d="M143 537H392L363 607H143ZM302 537L247 722L315 745L388 537M224 537V607M268 655L302 660L338 678M148 556l12-12M158 564l12-12M210 550v8M210 588v8M252 730l16-16M262 738l10-14"/>
            <path class="y" d="M150 541h0M215 541h0M306 541h0M385 541h0M150 601h0M215 601h0M289 601h0M363 601h0M269 660h0M335 679h0M249 720h0M312 742h0"/><path class="m" d="M257 537h0M223 567h0M364 620h0M302 660h0"/><path class="r" d="M336 568h0"/>
            <text class="d d2" x="200" y="493">b</text><text class="d d2" transform="rotate(-90 102 573)" x="102" y="573">d</text><text class="d d2" x="376" y="707">c</text><text class="d d2" x="270" y="767">a</text>
            <text class="t" x="322" y="492">箍筋1</text><text class="t" x="154" y="645">拉筋1</text><text class="t" x="225" y="645">jd</text><text class="t" x="428" y="604">箍筋2</text><text class="t" x="198" y="698">拉筋2</text><text class="n n2" x="266" y="850">L-c1</text></svg></button>
          <button type="button" class="tile"><svg width="140" height="139" viewBox="525 459 420 417">
            <path class="w" d="M592 526H874V624H732L768 733L680 762ZM733 480V512M874 480V512M727 495H792M814 495H880M888 526H928M888 624H928M910 520V564M910 584V630M598 664L622 656M640 776L664 768M610 658L626 705M634 730L656 778M682 774L688 798M774 740L782 764M680 786L718 774M742 766L784 750M680 510L703 537M600 614L640 623M820 630L794 566M768 694L691 662M738 642q14 0 18-14"/>
            <path class="c" d="M610 537H862V611H636ZM640 611L687 748L752 728L690 537M796 537V611M662 674L691 662L726 656M834 554l12-12M844 562l12-12M782 552v8M782 590v8M690 738l-4-14M702 736l-6-14"/>
            <path class="y" d="M616 543h0M682 543h0M785 543h0M853 543h0M639 605h0M704 605h0M785 605h0M853 605h0M667 679h0M723 664h0M688 743h0M744 725h0"/><path class="m" d="M703 537h0M794 566h0M640 623h0M691 662h0"/><path class="r" d="M658 568h0"/>
            <text class="d d2" x="804" y="493">b</text><text class="d d2" transform="rotate(-90 908 574)" x="908" y="574">d</text><text class="d d2" x="630" y="717">c</text><text class="d d2" x="730" y="769">a</text>
            <text class="t" x="654" y="499">箍筋1</text><text class="t" x="568" y="610">箍筋2</text><text class="t" x="822" y="647">拉筋1</text><text class="t" x="716" y="630">jd</text><text class="t" x="796" y="694">拉筋2</text><text class="n n2" x="755" y="853">L-d1</text></svg></button>
          <button type="button" class="tile"><svg width="140" height="139" viewBox="39 24 420 417">
            <path class="w" d="M89 61H214V250H416V370H89ZM89 30V55M214 30V55M419 24V58M80 41H138M162 41H312M332 41H425M81 49l16-16M206 49l16-16M411 49l16-16M418 58H459M420 250H459M420 370H459M443 58V142M443 166V300M443 326V370M435 50l16 16M435 242l16 16M435 362l16 16M220 154H254M236 154V184M236 208V250M208 230H252M272 230H312M308 212V246M228 81L162 98L128 72M162 98L128 116M75 160L127 209M70 262L91 238M198 378L223 362M285 378L253 335M376 222V312L350 335M376 312L405 335M214 440H286"/>
            <path class="c" d="M92 70H192Q206 70 206 80T190 91M98 91h14M92 115H192Q206 115 206 125T190 136M98 136h14M92 362V155H205V362M92 207H206M92 258H304V362H92M256 262V362M236 272v-8M236 352h10M335 258H345Q352 258 352 270V345Q350 362 335 360M330 268v10M330 345v12M388 258H400Q410 258 410 270V345Q408 362 390 360M386 268v10M386 345v12M172 178l14-14M184 190l14-14M272 280l14-14M284 292l14-14"/>
            <path class="y" d="M98 77h0M193 77h0M98 125h0M193 125h0M98 163h0M193 163h0M98 214h0M193 214h0M98 265h0M193 265h0M244 265h0M292 265h0M341 265h0M394 265h0M98 352h0M193 352h0M244 352h0M292 352h0M341 352h0M394 352h0"/><path class="m" d="M128 71h0M128 116h0M127 209h0M91 238h0M253 335h0M223 362h0M350 335h0M405 335h0"/><path class="r" d="M145 310h0"/>
            <text class="d d2" x="150" y="40" style="fill:#d01818">a</text><text class="d d2" x="322" y="42">b</text><text class="d d2" x="442" y="152">c</text><text class="d d2" x="442" y="312">d</text><text class="d d2" x="236" y="196">f</text><text class="d d2" x="262" y="230">e</text>
            <text class="t" x="260" y="81">拉筋3</text><text class="t" x="381" y="210">拉筋4</text><text class="t" transform="rotate(-90 57 140)" x="57" y="140">拉筋2</text><text class="t" transform="rotate(-90 57 298)" x="57" y="298">箍筋2</text><text class="t" x="175" y="391">箍筋1</text><text class="t" x="287" y="397">拉筋1</text><text class="d d2" x="257" y="427">L-a2</text></svg></button>
        </div>
      </fieldset>
    </div>
    <div class="flex-grow-1 d-flex flex-column" style="padding:9px 0 0 16px">
      <div class="props" style="margin-left:8px">
        <table>
          <colgroup><col style="width:22px"><col style="width:91px"><col></colgroup>
          <thead><tr><th></th><th>属性名称</th><th style="background:linear-gradient(#f8d79a,#f3bf62);color:#6b1040">属性值</th></tr></thead>
          <tbody class="lat">
            <tr><th>1</th><td>a(mm)</td><td>200</td></tr>
            <tr><th>2</th><td>b(mm)</td><td>600</td></tr>
            <tr><th style="background:#fbd19b">3</th><td style="background:#0078d7;color:#fff">c(mm)</td><td><input type="text" value="300" aria-label="c(mm)"></td></tr>
            <tr><th>4</th><td>d(mm)</td><td>200</td></tr>
          </tbody>
        </table>
      </div>
      <fieldset class="box border-end-0" style="height:226px;margin-top:12px"><legend>大图预览</legend>
        <svg class="big" width="210" height="210" viewBox="45 78 630 630" style="margin:10px 0 0 7px">
          <path class="w" d="M206 182H523V475H389V316H206ZM114 182H180M114 316H180M114 475H180M147 172V234M147 272V376M147 414V485M135 170l24 24M135 304l24 24M135 463l24 24M206 498V558M389 498V558M523 498V558M194 526H278M314 526H440M476 526H535M194 538l24-24M377 538l24-24M511 538l24-24M266 168L332 238M426 160L382 202M546 300L508 325M542 434L458 358"/>
          <path class="c" d="M218 199H508V297H218ZM405 199V456H508V199M306 220V206h20q6 0 6 8V282q0 8-6 8H306V274M405 360H508M408 383h20M480 383h24M472 220l20-20M488 230l20-20"/>
          <path class="y" d="M226 203h0M319 203h0M412 203h0M496 203h0M226 287h0M319 287h0M412 287h0M496 287h0M412 370h0M496 370h0M412 448h0M496 448h0"/><path class="m" d="M382 202h0M332 238h0M508 325h0M458 358h0"/><path class="r" d="M452 240h0"/>
          <text class="d" transform="rotate(-90 147 254)" x="147" y="254">d</text><text class="d" transform="rotate(-90 147 395)" x="147" y="395">c</text><text class="d" x="295" y="530">b</text><text class="d" x="458" y="530">a</text>
          <text class="t" x="270" y="148">拉筋1</text><text class="t" x="486" y="146">箍筋1</text><text class="t" transform="rotate(-90 564 278)" x="564" y="278">箍筋2</text><text class="t" transform="rotate(-90 564 404)" x="564" y="404">拉筋2</text><text class="n" x="335" y="650">L-c</text>
        </svg>
      </fieldset>
      <div class="d-flex justify-content-end" style="gap:15px;padding:10px 14px 0 0"><button type="button" class="okbtn">确定</button><button type="button" class="okbtn">取消</button></div>
    </div>
  </div>
</div>
</body>
</html>
